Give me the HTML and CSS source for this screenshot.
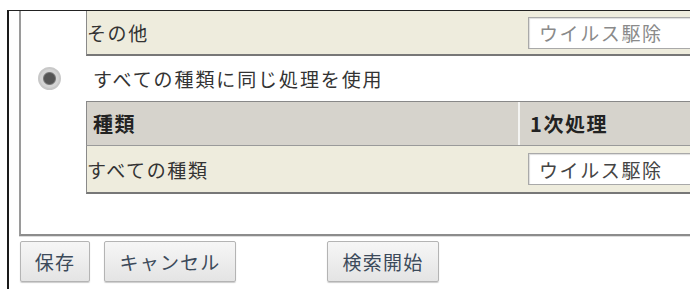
FILE: index.html
```html
<!DOCTYPE html>
<html>
  <head>
    <title>処理設定</title>
    <link rel="stylesheet" href="styles.css">
  </head>
  <body>
    <div class='frame'>
      <div class='panel'>
        <div class='row row-data'>
          <div class='cell cell-name'>その他</div>
          <div class='cell cell-action'>
            <div class='select disabled'>ウイルス駆除</div>
          </div>
        </div>

        <label class='choice'>
          <span class='radio checked'></span>
          <span>すべての種類に同じ処理を使用</span>
        </label>

        <div class='table'>
          <div class='row row-head'>
            <div class='cell cell-name'>種類</div>
            <div class='cell cell-action'>1次処理</div>
          </div>
          <div class='row row-data'>
            <div class='cell cell-name'>すべての種類</div>
            <div class='cell cell-action'>
              <div class='select'>ウイルス駆除</div>
            </div>
          </div>
        </div>
      </div>

      <div class='buttons'>
        <button class='btn btn-save'>保存</button>
        <button class='btn btn-cancel'>キャンセル</button>
        <button class='btn btn-search'>検索開始</button>
      </div>
    </div>
  </body>
</html>
```

FILE: styles.css
```css
html, body {
  margin: 0;
  height: 100%;
  overflow: hidden;
  background: #fff;
  color: #333;
  font-family: 'Noto Sans CJK JP', 'Noto Sans', sans-serif;
  font-size: 19px;
}

/* page layout */
.frame {
  margin: 10px 0 0 7px;
  height: 100%;
  border-left: 2px solid #1a1a1a;
  border-top: 1px solid #222;
}

.panel {
  margin-left: 10px;
  height: 223px;
  border-left: 2px solid #9a9a9a;
  border-bottom: 2px solid #8c8c8c;
  box-shadow: 0 1px 0 #ddd;
}

/* rows */
.table {
  margin-left: 65px;
  border-top: 1px solid #888;
}

.row {
  display: flex;
  overflow: hidden;
  border-left: 1px solid #8a8a8a;
}

.panel > .row {
  margin-left: 65px;
}

.cell {
  display: flex;
  align-items: center;
  letter-spacing: 1.6px;
  white-space: nowrap;
}

.cell-name {
  width: 431px;
  flex: none;
}

.cell-action {
  flex: 1;
  min-width: 0;
}

.row-data {
  height: 43px;
  background: #eeecdd;
  border-bottom: 2px solid #777;
}

.table .row-data {
  height: 46px;
}

.row-head {
  height: 43px;
  background: #d6d3cc;
  font-weight: bold;
  font-size: 20px;
  color: #222;
  border-bottom: 1px solid #9a9a9a;
}

.row-head .cell-name {
  padding-left: 6px;
  width: 425px;
  border-right: 2px solid #f4f4f2;
}

.row-head .cell-action {
  padding-left: 10px;
}

.select {
  margin-left: 10px;
  height: 30px;
  width: 200px;
  flex: none;
  padding-left: 10px;
  display: flex;
  align-items: center;
  background: #fff;
  border: 1px solid #a9a9a9;
  box-shadow: inset 1px 1px 1px #ddd;
  color: #444;
}

.select.disabled {
  color: #8a8a8a;
}

/* radio line */
.choice {
  display: flex;
  align-items: center;
  height: 45px;
  gap: 32px;
  padding-left: 17px;
  letter-spacing: 1.9px;
  cursor: pointer;
}

.radio {
  --size: 23px;
  width: var(--size);
  height: var(--size);
  box-sizing: border-box;
  border-radius: 50%;
  border: 2px solid #c8c8c8;
  background: radial-gradient(circle, #555 0 5px, #7a7a7a 6px, #d4d4d4 7px);
}

/* buttons */
.buttons {
  display: flex;
  padding: 5px 0 0 11px;
}

.btn {
  height: 41px;
  padding: 0;
  border: 1px solid #b4b4b4;
  border-radius: 2px;
  background: linear-gradient(#f6f6f6, #e4e4e4);
  box-shadow: 0 1px 1px #ccc;
  font-family: inherit;
  font-size: 19px;
  letter-spacing: 1.2px;
  color: #3c4a5a;
}

.btn-save {
  width: 70px;
}

.btn-cancel {
  width: 132px;
  margin-left: 14px;
}

.btn-search {
  width: 112px;
  margin-left: 91px;
}
```
